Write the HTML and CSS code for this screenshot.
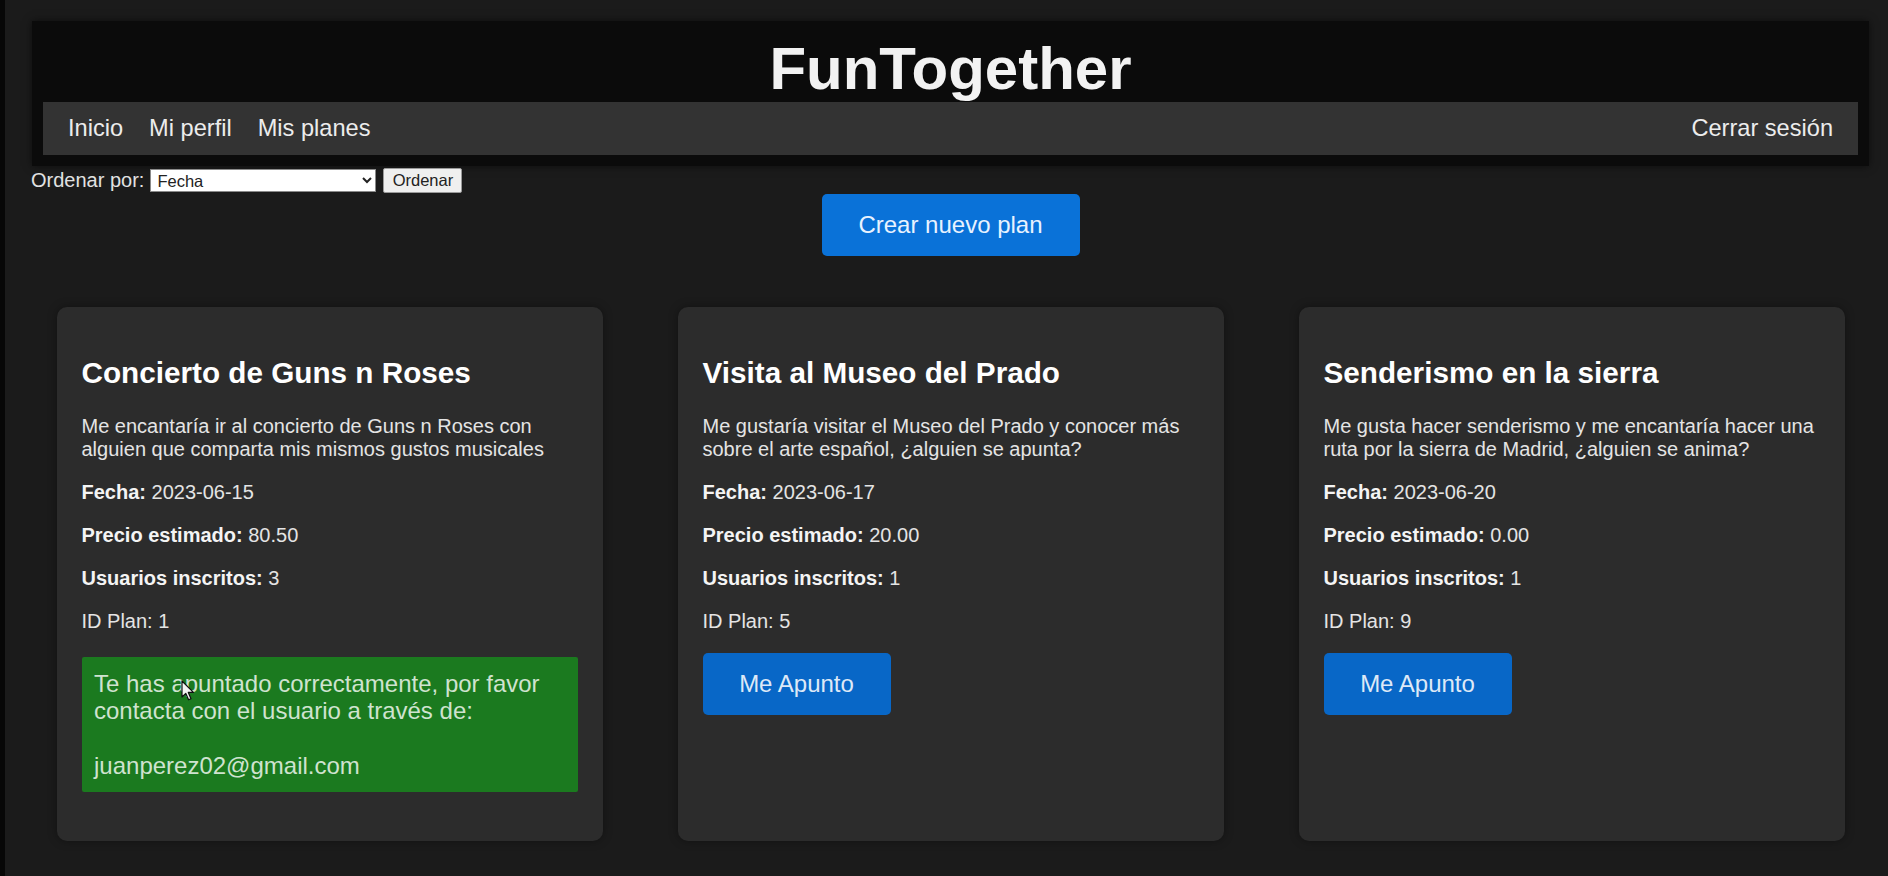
FILE: index.html
```html
<!DOCTYPE html>
<html lang="es">
<head>
<meta charset="utf-8">
<title>FunTogether</title>
<link rel="stylesheet" href="styles.css">
</head>
<body>
<div class="page">
  <header class="site-header">
    <h1 class="brand">FunTogether</h1>
    <nav class="nav">
      <div class="nav-left">
        <a href="#" class="nav-link">Inicio</a>
        <a href="#" class="nav-link">Mi perfil</a>
        <a href="#" class="nav-link">Mis planes</a>
      </div>
      <a href="#" class="nav-link">Cerrar sesión</a>
    </nav>
  </header>

  <form class="sort">
    <label class="sort-label" for="orden">Ordenar por:</label>
    <select id="orden" class="sort-select">
      <option>Fecha</option>
      <option>Precio</option>
    </select>
    <button type="button" class="sort-btn">Ordenar</button>
  </form>

  <div class="create-wrap">
    <button type="button" class="btn-create">Crear nuevo plan</button>
  </div>

  <section class="plans">
    <article class="card">
      <h2 class="card-title">Concierto de Guns n Roses</h2>
      <p>Me encantaría ir al concierto de Guns n Roses con alguien que comparta mis mismos gustos musicales</p>
      <p><strong>Fecha:</strong> 2023-06-15</p>
      <p><strong>Precio estimado:</strong> 80.50</p>
      <p><strong>Usuarios inscritos:</strong> 3</p>
      <p>ID Plan: 1</p>
      <div class="success">Te has apuntado correctamente, por favor contacta con el usuario a través de:<br><br>juanperez02@gmail.com</div>
    </article>

    <article class="card">
      <h2 class="card-title">Visita al Museo del Prado</h2>
      <p>Me gustaría visitar el Museo del Prado y conocer más sobre el arte español, ¿alguien se apunta?</p>
      <p><strong>Fecha:</strong> 2023-06-17</p>
      <p><strong>Precio estimado:</strong> 20.00</p>
      <p><strong>Usuarios inscritos:</strong> 1</p>
      <p>ID Plan: 5</p>
      <button type="button" class="btn-join">Me Apunto</button>
    </article>

    <article class="card">
      <h2 class="card-title">Senderismo en la sierra</h2>
      <p>Me gusta hacer senderismo y me encantaría hacer una ruta por la sierra de Madrid, ¿alguien se anima?</p>
      <p><strong>Fecha:</strong> 2023-06-20</p>
      <p><strong>Precio estimado:</strong> 0.00</p>
      <p><strong>Usuarios inscritos:</strong> 1</p>
      <p>ID Plan: 9</p>
      <button type="button" class="btn-join">Me Apunto</button>
    </article>
  </section>
</div>

<svg class="cursor" width="14" height="22" viewBox="0 0 14 22" aria-hidden="true">
  <path d="M1 1 L1 17 L4.8 13.4 L7.6 19.8 L10 18.8 L7.3 12.4 L12.4 12.4 Z" fill="#f4f4f4" stroke="#111" stroke-width="1.2" stroke-linejoin="round"/>
</svg>
</body>
</html>
```

FILE: styles.css
```css
* {
  box-sizing: border-box;
}

html, body {
  margin: 0;
  padding: 0;
}

body {
  background: #1b1b1b;
  color: #e6e6e6;
  font-family: "Liberation Sans", Arial, sans-serif;
  min-height: 876px;
  border-left: 5px solid #070707;
  position: relative;
}

.page {
  padding: 21px 19px 0 27px;
}

/* Header */
.site-header {
  background: #0b0b0b;
  padding: 15px 11px 11px;
  box-shadow: 0 0 8px rgba(0, 0, 0, 0.55);
}

.brand {
  margin: 0;
  font-size: 60px;
  line-height: 66px;
  font-weight: bold;
  text-align: center;
  color: #f2f2f2;
}

.nav {
  display: flex;
  justify-content: space-between;
  align-items: center;
  height: 53px;
  padding: 0 25px;
  background: #333333;
}

.nav-left {
  display: flex;
  gap: 26px;
}

.nav-link {
  color: #ececec;
  text-decoration: none;
  font-size: 23.6px;
}

/* Sort form */
.sort {
  display: flex;
  align-items: center;
  height: 25px;
  margin: 2px 0 0 -1px;
}

.sort-label {
  font-size: 20px;
  color: #e2e2e2;
  margin-right: 6px;
}

.sort-select {
  width: 226px;
  height: 23px;
  font-family: "Liberation Sans", Arial, sans-serif;
  font-size: 16.5px;
  color: #222;
  background: #ffffff;
  border: 1px solid #8a8a8a;
  border-radius: 0;
  padding: 0 2px;
  margin: 0 7px 0 0;
}

.sort-btn {
  width: 79px;
  height: 25px;
  font-family: "Liberation Sans", Arial, sans-serif;
  font-size: 16.5px;
  color: #222;
  background: #efefef;
  border: 1px solid #9a9a9a;
  border-radius: 2px;
  padding: 0;
}

/* Create button */
.create-wrap {
  display: flex;
  justify-content: center;
  margin-top: 1px;
}

.btn-create {
  width: 258px;
  height: 62px;
  background: #0a72d8;
  color: #e8f2ff;
  border: none;
  border-radius: 5px;
  font-family: "Liberation Sans", Arial, sans-serif;
  font-size: 24px;
  padding: 0;
}

/* Cards */
.plans {
  display: flex;
  justify-content: center;
  gap: 75px;
  margin-top: 51px;
}

.card {
  width: 546px;
  padding: 25px;
  background: #2c2c2c;
  border-radius: 10px;
  box-shadow: 0 0 10px rgba(0, 0, 0, 0.35);
}

.card-title {
  font-size: 29.7px;
  line-height: 34px;
  margin: 24px 0 25px;
  color: #ffffff;
}

.card p {
  font-size: 20px;
  line-height: 23px;
  margin: 20px 0;
  color: #e4e4e4;
}

.card strong {
  color: #f4f4f4;
}

.success {
  background: #1b7a1f;
  color: #cfe3cf;
  font-size: 24px;
  line-height: 27.6px;
  padding: 12.5px;
  margin: 24px 0 24px;
  border-radius: 2px;
}

.btn-join {
  width: 188px;
  height: 62px;
  background: #0867c7;
  color: #dde9f7;
  border: none;
  border-radius: 5px;
  font-family: "Liberation Sans", Arial, sans-serif;
  font-size: 24px;
  padding: 0;
}

.cursor {
  position: absolute;
  left: 176px;
  top: 680px;
}
```
